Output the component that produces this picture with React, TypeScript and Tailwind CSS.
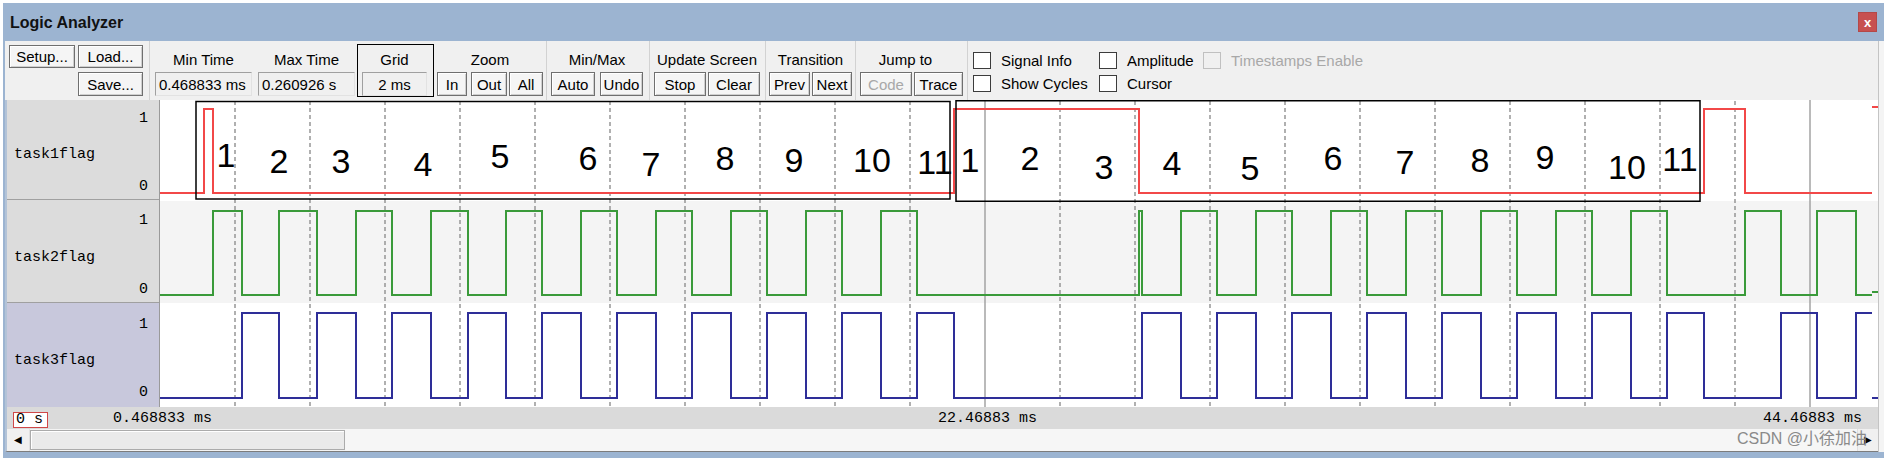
import React from 'react';

// chart space: x=160 in page is 0 in the svg
const X0 = 160;
const X_END = 1872;

const RED_EDGES = [204, 213, 954, 1139, 1704, 1745];
const GREEN_EDGES = [
  213, 242, 279, 317, 356, 392, 431, 468, 506, 542, 581, 617, 656, 692, 731, 767, 806, 842, 881, 917,
  1139, 1142, 1181, 1217, 1256, 1292, 1331, 1367, 1406, 1442, 1481, 1517, 1556, 1592, 1631, 1667,
  1745, 1781, 1817, 1856,
];
const BLUE_EDGES = [
  242, 279, 317, 356, 392, 431, 468, 506, 542, 581, 617, 656, 692, 731, 767, 806, 842, 881, 917, 954,
  1142, 1181, 1217, 1256, 1292, 1331, 1367, 1406, 1442, 1481, 1517, 1556, 1592, 1631, 1667, 1704,
  1781, 1817, 1856,
];

const MARKS: [number, number, string][] = [
  [226, 167, '1'], [279, 173, '2'], [341, 173, '3'], [423, 176, '4'], [500, 168, '5'], [588, 170, '6'],
  [651, 176, '7'], [725, 170, '8'], [794, 172, '9'], [872, 172, '10'], [935, 174, '11'],
  [970, 172, '1'], [1030, 170, '2'], [1104, 179, '3'], [1172, 175, '4'], [1250, 180, '5'], [1333, 170, '6'],
  [1405, 174, '7'], [1480, 172, '8'], [1545, 169, '9'], [1627, 179, '10'], [1680, 171, '11'],
];

function wavePath(edges: number[], yHigh: number, yLow: number) {
  let high = false;
  let d = `M0 ${yLow}`;
  for (const e of edges) {
    high = !high;
    d += ` H${e - X0} V${high ? yHigh : yLow}`;
  }
  return d + ` H${X_END - X0}`;
}

const btn =
  'h-full flex items-center justify-center bg-[#f5f5f5] border border-[#6f6f6f] shadow-[inset_1px_1px_0_#ffffff,inset_-1px_-1px_0_#cfcfcf] leading-none';

function Btn({ className = '', disabled, children }: { className?: string; disabled?: boolean; children: React.ReactNode }) {
  return <div className={`${btn} ${disabled ? 'text-[#a8a8a8]' : ''} ${className}`}>{children}</div>;
}

function ValueBox({ className = '', children }: { className?: string; children: React.ReactNode }) {
  return (
    <div
      className={`h-[24px] flex items-center border border-t-[#a0a0a0] border-l-[#a0a0a0] border-b-[#e2e2e2] border-r-[#e2e2e2] bg-[#f0f0f0] leading-none ${className}`}
    >
      {children}
    </div>
  );
}

function Group({ className = '', label, labelClass = '', children }: { className?: string; label: string; labelClass?: string; children: React.ReactNode }) {
  return (
    <div className={`pt-[9px] flex flex-col ${className}`}>
      <div className="self-start flex flex-col items-center">
        <div className={`h-[20px] leading-[20px] whitespace-nowrap ${labelClass}`}>{label}</div>
        <div className="mt-[2px] h-[24px] flex">{children}</div>
      </div>
    </div>
  );
}

function Check({ label, disabled }: { label: string; disabled?: boolean }) {
  return (
    <div className="h-[17px] flex items-center">
      <div
        className={`w-[18px] h-[17px] border ${disabled ? 'border-[#c0c0c0] bg-[#f0f0f0]' : 'border-[#3c3c3c] bg-white'}`}
      />
      <span className={`ml-[10px] whitespace-nowrap leading-none ${disabled ? 'text-[#a8a8a8]' : ''}`}>{label}</span>
    </div>
  );
}

function Toolbar() {
  return (
    <div className="h-[59px] flex text-[15px]">
      <div className="w-[145px] border-r border-[#d2d2d2] pl-[4px] pt-[4px] grid grid-cols-[66px_65px] grid-rows-[23px_24px] gap-x-[3px] gap-y-[4px] content-start">
        <Btn>Setup...</Btn>
        <Btn>Load...</Btn>
        <div />
        <Btn>Save...</Btn>
      </div>

      <Group className="w-[105px] pl-[5px]" label="Min Time">
        <ValueBox className="w-[97px] pl-[3px]">0.468833 ms</ValueBox>
      </Group>
      <Group className="w-[102px] pl-[3px]" label="Max Time">
        <ValueBox className="w-[97px] pl-[3px]">0.260926 s</ValueBox>
      </Group>

      <div className="w-[77px] pt-[3px]">
        <div className="h-[53px] border border-black pt-[5px] pl-[4px]">
          <div className="w-[65px] flex flex-col items-center">
            <div className="h-[20px] leading-[20px]">Grid</div>
            <ValueBox className="mt-[2px] w-[65px] justify-center">2 ms</ValueBox>
          </div>
        </div>
      </div>

      <Group className="w-[113px] pl-[3px] border-r border-[#d2d2d2]" label="Zoom">
        <Btn className="w-[30px]">In</Btn>
        <Btn className="w-[36px] ml-[4px]">Out</Btn>
        <Btn className="w-[34px] ml-[2px]">All</Btn>
      </Group>
      <Group className="w-[103px] pl-[4px] border-r border-[#d2d2d2]" label="Min/Max">
        <Btn className="w-[44px]">Auto</Btn>
        <Btn className="w-[43px] ml-[5px]">Undo</Btn>
      </Group>
      <Group className="w-[116px] pl-[4px] border-r border-[#d2d2d2]" label="Update Screen">
        <Btn className="w-[52px]">Stop</Btn>
        <Btn className="w-[52px] ml-[2px]">Clear</Btn>
      </Group>
      <Group className="w-[90px] pl-[3px] border-r border-[#d2d2d2]" label="Transition">
        <Btn className="w-[41px]">Prev</Btn>
        <Btn className="w-[40px] ml-[2px]">Next</Btn>
      </Group>
      <Group className="w-[112px] pl-[4px] border-r border-[#d2d2d2]" label="Jump to" labelClass="pr-[12px]">
        <Btn className="w-[52px]" disabled>Code</Btn>
        <Btn className="w-[49px] ml-[2px]">Trace</Btn>
      </Group>

      <div className="flex-1 pl-[5px] pt-[11px] grid grid-cols-[126px_104px_auto] grid-rows-[17px_17px] gap-y-[6px] content-start">
        <Check label="Signal Info" />
        <Check label="Amplitude" />
        <Check label="Timestamps Enable" disabled />
        <Check label="Show Cycles" />
        <Check label="Cursor" />
      </div>
    </div>
  );
}

function NameCell({ name, className }: { name: string; className: string }) {
  return (
    <div
      className={`flex flex-col justify-between pl-[7px] pr-[11px] font-['Liberation_Mono',monospace] text-[15px] leading-[16px] ${className}`}
    >
      <div className="text-right">1</div>
      <div className="pt-[4px]">{name}</div>
      <div className="text-right">0</div>
    </div>
  );
}

function Chart() {
  const grid = Array.from({ length: 22 }, (_, k) => 75 + 75 * k);
  return (
    <svg width={1718} height={307} viewBox="0 0 1718 307" className="block shrink-0">
      <rect x={0} y={0} width={1718} height={101} fill="#ffffff" />
      <rect x={0} y={101} width={1718} height={102} fill="#f4f4f4" />
      <rect x={0} y={203} width={1718} height={104} fill="#ffffff" />
      {grid.map((x) =>
        x === 825 || x === 1650 ? (
          <line key={x} x1={x} x2={x} y1={0} y2={307} stroke="#a3a3a3" strokeWidth={1.5} />
        ) : (
          <line key={x} x1={x} x2={x} y1={1} y2={307} stroke="#8f8f8f" strokeWidth={1.4} strokeDasharray="4 3" />
        )
      )}
      <path d={wavePath(RED_EDGES, 9, 93)} fill="none" stroke="#f24848" strokeWidth={2} />
      <path d={wavePath(GREEN_EDGES, 111, 195)} fill="none" stroke="#3a9a3a" strokeWidth={2} />
      <path d={wavePath(BLUE_EDGES, 213, 298)} fill="none" stroke="#2e2e98" strokeWidth={2} />
      <line x1={1712} x2={1718} y1={7} y2={7} stroke="#f24848" strokeWidth={2} />
      <line x1={1712} x2={1718} y1={192} y2={192} stroke="#3a9a3a" strokeWidth={2} />
      <line x1={1712} x2={1718} y1={298} y2={298} stroke="#2e2e98" strokeWidth={2} />

      <rect x={36} y={1.5} width={754} height={97.5} fill="none" stroke="#000" strokeWidth={1.5} />
      <rect x={796} y={0.75} width={744} height={100.5} fill="none" stroke="#000" strokeWidth={1.5} />
      {MARKS.map(([cx, by, t], i) => (
        <text
          key={i}
          x={cx - X0}
          y={by - 100}
          textAnchor="middle"
          fontFamily="'Liberation Sans', Arial, sans-serif"
          fontSize={34}
          fill="#000"
        >
          {t}
        </text>
      ))}
    </svg>
  );
}

function Rows() {
  return (
    <div className="h-[307px] flex">
      <div className="w-[155px] flex flex-col border-l-2 border-[#b3c3d7] border-r border-r-[#9a9a9a]">
        <NameCell name="task1flag" className="h-[100px] pt-[11px] pb-[4px] bg-[#dcdcdc] border-b border-[#a0a0a0]" />
        <NameCell name="task2flag" className="h-[103px] pt-[13px] pb-[4px] bg-[#dcdcdc] border-b border-[#a0a0a0]" />
        <NameCell name="task3flag" className="h-[104px] pt-[14px] pb-[6px] bg-[#c8c8dc]" />
      </div>
      <Chart />
    </div>
  );
}

function Axis() {
  return (
    <div className="h-[22px] flex items-center bg-[#dadada] border-l-2 border-[#b3c3d7] font-['Liberation_Mono',monospace] text-[15px] leading-none whitespace-nowrap">
      <div className="ml-[6px] mt-[3px] w-[35px] h-[16px] border border-[#d04848] bg-white pl-[2px] flex items-center">0 s</div>
      <span className="ml-[65px]">0.468833 ms</span>
      <span className="ml-[726px]">22.46883 ms</span>
      <span className="ml-[726px]">44.46883 ms</span>
    </div>
  );
}

function Scrollbar() {
  return (
    <div className="h-[23px] flex border-l-2 border-[#b3c3d7] border-b border-b-[#7c7c7c] bg-[#f4f4f4]">
      <div className="w-[23px] flex items-center justify-center bg-[#f0f0f0] border-r border-[#e0e0e0] text-[10px] leading-none">◀</div>
      <div className="w-[315px] mt-[1px] mb-[1px] bg-[#eaeaea] border border-[#ababab] shadow-[inset_1px_1px_0_#ffffff]" />
      <div className="flex-1 bg-[#f6f6f6]" />
      <div className="w-[21px] flex items-center justify-center bg-[#f0f0f0] border-l border-[#e0e0e0] text-[10px] leading-none">▶</div>
    </div>
  );
}

export default function App() {
  return (
    <div className="relative w-[1887px] h-[458px] overflow-hidden bg-white pt-[3px] px-[3px] flex flex-col font-['Liberation_Sans',Arial,sans-serif] text-black">
      <div className="h-[38px] shrink-0 bg-[#9cb4d1] flex items-center justify-between pl-[7px] pr-[7px]">
        <span className="text-[16px] font-bold pt-[2px] text-[#111]">Logic Analyzer</span>
        <div className="w-[19px] h-[20px] bg-[#c75050] border border-[#b44848] flex items-center justify-center text-white font-bold text-[13px] leading-none">
          x
        </div>
      </div>
      <div className="flex-1 flex bg-[#9cb4d1] pl-[2px] pb-[6px]">
        <div className="w-[1873px] flex flex-col bg-[#f0f0f0]">
          <Toolbar />
          <Rows />
          <Axis />
          <Scrollbar />
        </div>
        <div className="flex-1 bg-[#f4f4f4] border-l border-[#c4c4c4]" />
      </div>
      <span className="absolute left-[1737px] top-[430px] text-[16px] leading-[18px] text-[#8a8a8a] whitespace-nowrap font-['Liberation_Sans','Noto_Sans_CJK_SC',sans-serif]">
        CSDN @小徐加油
      </span>
    </div>
  );
}
